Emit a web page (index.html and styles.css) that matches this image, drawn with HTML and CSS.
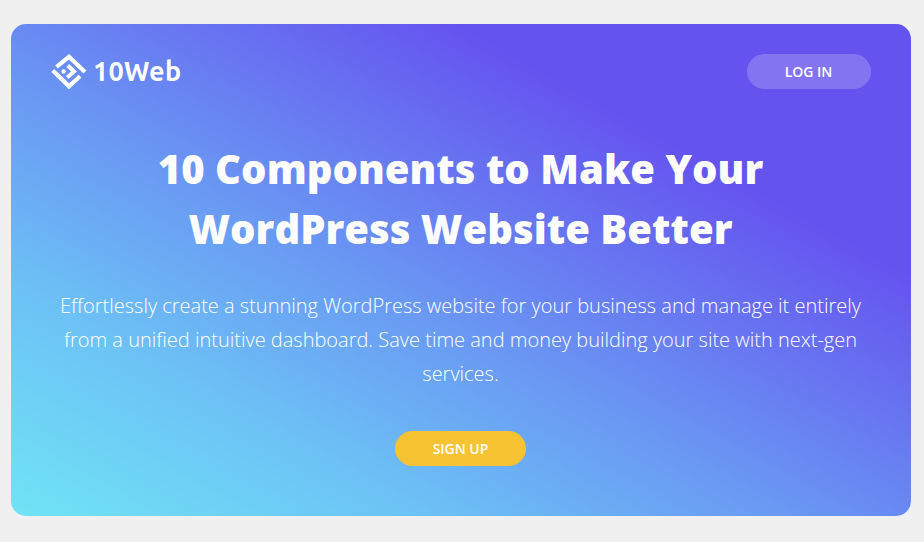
FILE: index.html
```html
<!DOCTYPE html>
<html lang="en">
<head>
<meta charset="utf-8">
<title>10Web</title>
<link rel="stylesheet" href="styles.css">
</head>
<body>
<main class="hero">
  <header class="bar">
    <a class="brand">
      <svg class="mark" viewBox="0 0 36 36" width="36" height="36" fill="none" stroke="#fff" stroke-width="4.200">
        <path d="M5.500 12.800 18 2.800 34 18"/>
        <path d="M1.800 16.500 18 32.300 29 22.300"/>
        <path d="M16.800 11.500 23 17.500 16.300 23.500" stroke-width="4"/>
        <circle cx="12.600" cy="17.500" r="2.200" fill="#fff" stroke="none"/>
      </svg>
      <span class="name">10Web</span>
    </a>
    <a class="button login">LOG IN</a>
  </header>
  <h1 class="title">10 Components to Make Your<br>WordPress Website Better</h1>
  <p class="lead">Effortlessly create a stunning WordPress website for your business and manage it entirely from a unified intuitive dashboard. Save time and money building your site with next-gen services.</p>
  <a class="button signup">SIGN UP</a>
</main>
</body>
</html>
```
FILE: styles.css
```css
body { margin: 0; padding: 24px 13px 26px 11px; background: #f0f0f0; font-family: "Open Sans", sans-serif; color: #fff; }
.hero { box-sizing: border-box; width: 900px; height: 492px; padding: 30px 40px; border-radius: 15px; display: flex; flex-direction: column; align-items: center; text-align: center; background: linear-gradient(29deg, #70e4f5 0%, #6cc2f5 23%, #6a9df3 41.5%, #6553ef 74.6%); }
.bar { display: flex; justify-content: space-between; align-items: center; width: 100%; height: 35px; }
.brand { display: flex; align-items: center; gap: 6px; }
.name { font: 700 27px Ubuntu, "Noto Sans", "Open Sans", sans-serif; line-height: 34px; letter-spacing: 0.3px; position: relative; top: -1px; }
.button { box-sizing: border-box; height: 35px; border-radius: 18px; font-weight: 600; font-size: 14px; line-height: 35px; }
.login { width: 124px; padding-right: 1px; background: rgba(255,255,255,.2); }
.title { margin: 50px 1px 0 0; font-weight: 800; font-size: 40px; line-height: 60px; letter-spacing: 0.03px; }
.lead { margin: 30px 1px 0 0; width: 820px; font-weight: 300; font-size: 20px; line-height: 34px; }
.signup { margin: 40px 1px 0 0; width: 131px; background: #f8c332; }
```
